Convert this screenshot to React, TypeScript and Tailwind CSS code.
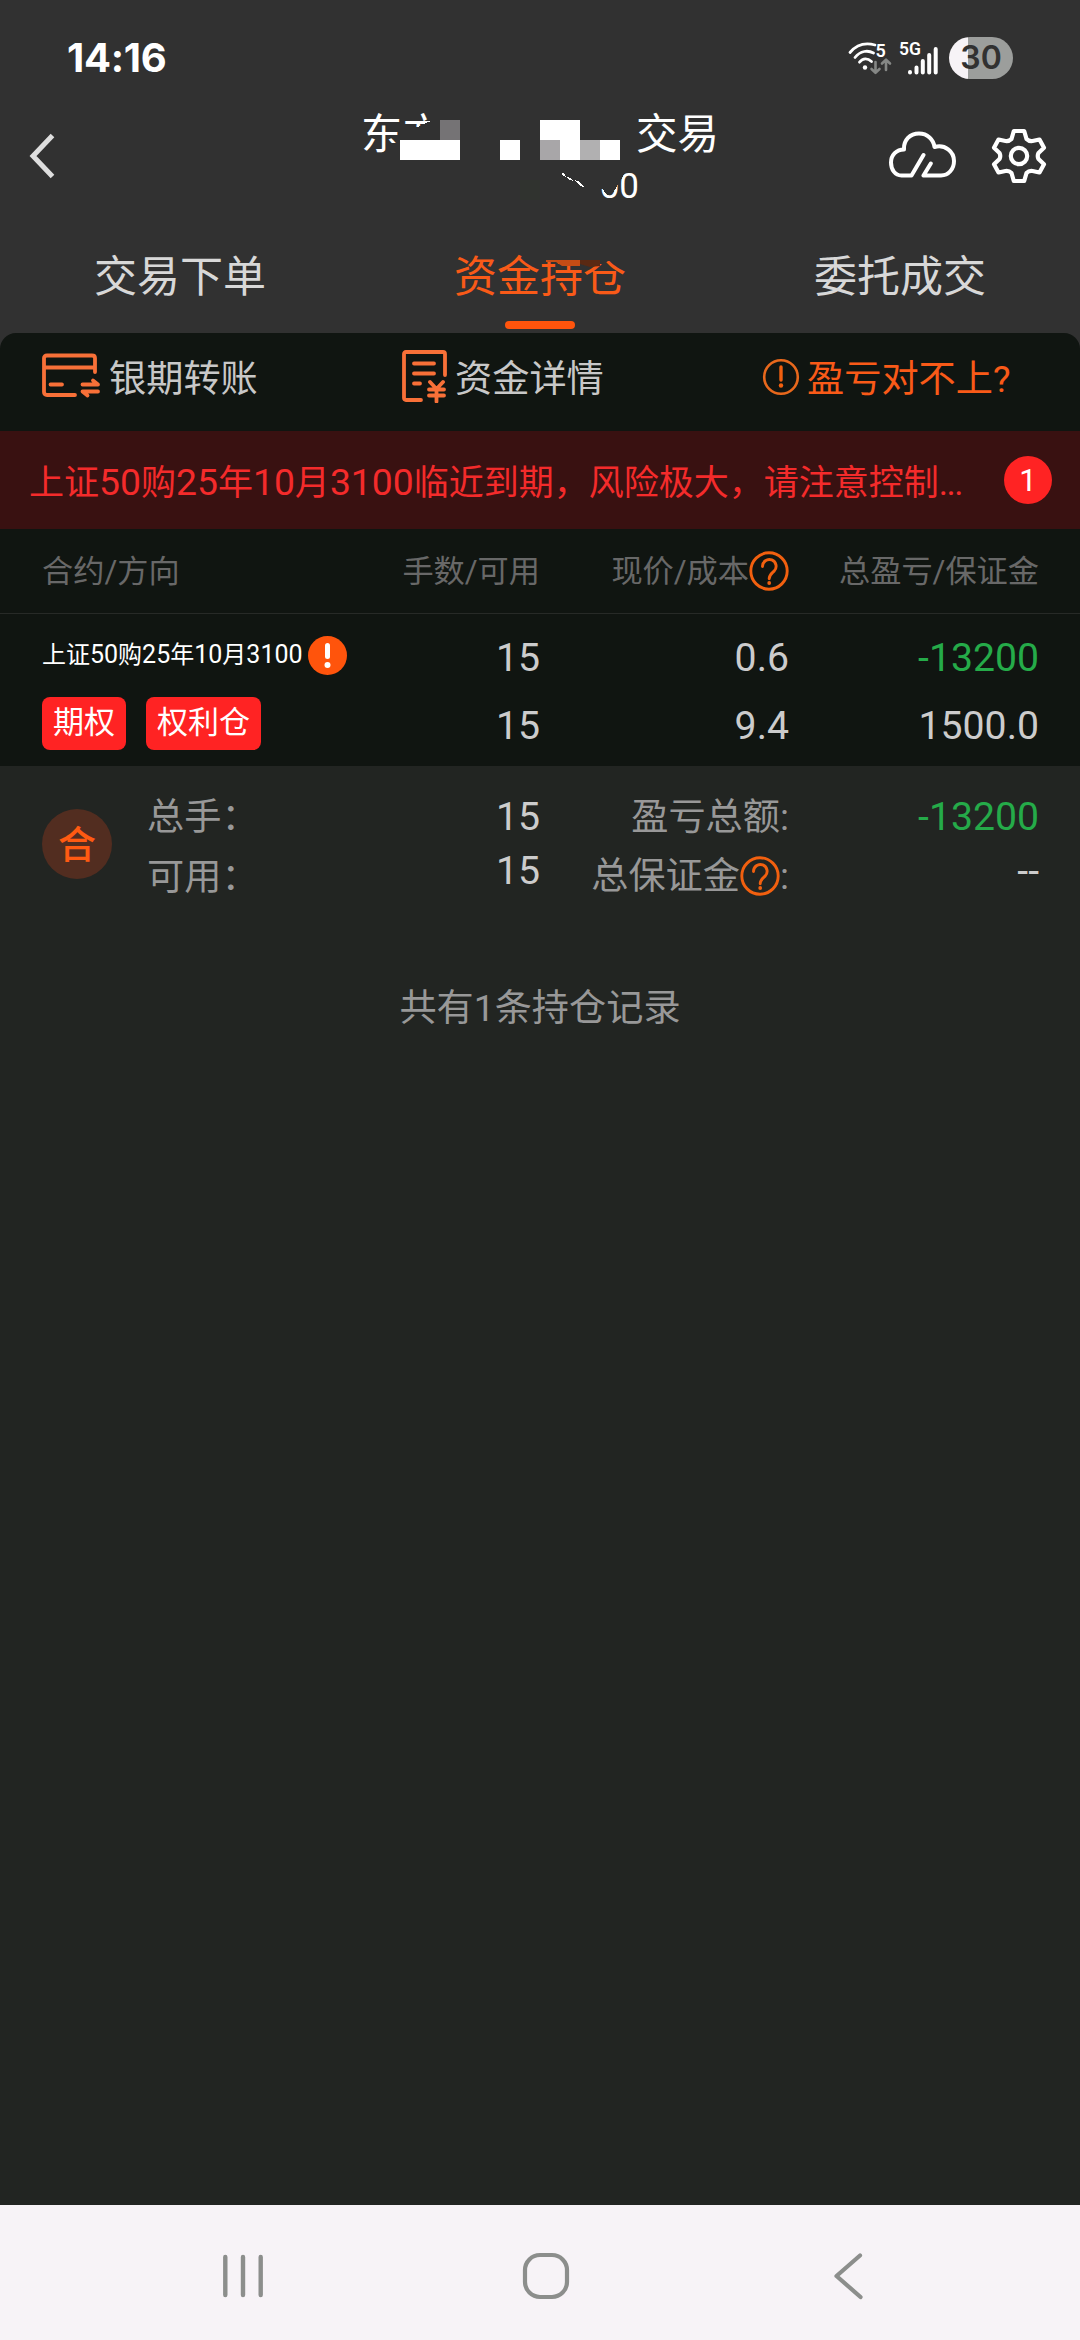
import React from "react";
import clsx from "clsx";

interface HoldingRow {
  name: string;
  tags: string[];
  lots: [string, string];
  price: [string, string];
  profit: [string, string];
}

const tabs = ["交易下单", "资金持仓", "委托成交"];

const holdings: HoldingRow[] = [
  {
    name: "上证50购25年10月3100",
    tags: ["期权", "权利仓"],
    lots: ["15", "15"],
    price: ["0.6", "9.4"],
    profit: ["-13200", "1500.0"],
  },
];

// Latin digits are set slightly larger than the Chinese glyphs around them
const MixedText: React.FC<{ text: string; digitClass: string }> = ({
  text,
  digitClass,
}) => (
  <>
    {text.split(/(\d+)/).map((part, index) =>
      /\d/.test(part) ? (
        <span key={index} className={digitClass}>
          {part}
        </span>
      ) : (
        part
      )
    )}
  </>
);

const HelpIcon: React.FC = () => (
  <svg
    width="40"
    height="40"
    viewBox="0 0 40 40"
    fill="none"
    className="mb-[3px] shrink-0"
  >
    <circle cx="20" cy="20" r="18.2" stroke="#f2600f" strokeWidth="2.9" />
    <path
      d="M13.5 15.5a6.8 6.8 0 1 1 11.6 4.6c-2.6 2.6-4.9 3.9-4.9 7.6"
      stroke="#f2600f"
      strokeWidth="2.9"
      strokeLinecap="round"
    />
    <circle cx="20.2" cy="32" r="1.9" fill="#f2600f" />
  </svg>
);

const StatusBar: React.FC = () => (
  <div className="flex h-[98px] items-start justify-between pl-[67px] pr-[67px] pt-[36px]">
    <span className="font-['Inter',sans-serif] text-[40px] font-bold leading-[44px] tracking-[-0.3px] text-white">
      14:16
    </span>
    <div className="flex items-center">
      <svg width="94" height="44" viewBox="0 0 94 44" fill="none">
        <g stroke="#fff" strokeWidth="2.8" strokeLinecap="round">
          <path d="M2 16.5C9.5 7.5 18 6.5 27 9" />
          <path d="M7 21.5C12.5 14.5 20 14 25.5 17" />
          <path d="M11.5 26.2C15 22 19.5 22 23.5 25.5" />
        </g>
        <circle cx="17" cy="31.5" r="2.2" fill="#fff" />
        <text
          x="27.5"
          y="20.5"
          fontSize="18"
          fontWeight="600"
          fill="#fff"
          fontFamily="Roboto, sans-serif"
        >
          5
        </text>
        <g
          stroke="#858785"
          strokeWidth="2.6"
          strokeLinecap="round"
          strokeLinejoin="round"
        >
          <path d="M27.5 26v10.5M23.5 33l4 3.8 4-3.8" />
          <path d="M38 34V24.2M34 27.5l4-3.8 4 3.8" />
        </g>
        <text
          x="51"
          y="18.5"
          fontSize="17.5"
          fontWeight="600"
          fill="#fff"
          fontFamily="Roboto, sans-serif"
        >
          5G
        </text>
        <g stroke="#fff" strokeWidth="4" strokeLinecap="round">
          <path d="M62 36v.5M68.5 31.5v5M74.8 25v11.5M81.2 19v17.5M87.7 13v23.5" />
        </g>
      </svg>
      <div className="ml-[7px] flex h-[42px] w-[64px] items-center justify-center rounded-full bg-[linear-gradient(to_right,#f7f3f7_19px,#9c9e9c_19px)] font-['Inter',sans-serif] text-[32px] font-semibold text-[#313131]">
        30
      </div>
    </div>
  </div>
);

const TitleBar: React.FC = () => (
  <div className="flex h-[116px] items-center justify-between pl-[29px] pr-[33px]">
    <svg
      width="26"
      height="46"
      viewBox="0 0 26 46"
      fill="none"
      className="mr-[83px]"
    >
      <path d="M23.5 2.5L4 23l19.5 20.5" stroke="#dedede" strokeWidth="5" />
    </svg>

    <div className="relative ml-[54px] h-full w-[358px] text-white">
      <div className="flex h-[70px] items-center justify-between pt-[5px] text-[41.5px]">
        <span>东方</span>
        <span>交易</span>
      </div>
      <div className="flex h-[34px] items-center justify-end pr-[80px] pt-[2px] text-[35px] leading-none">
        <span>00</span>
      </div>
      {/* privacy mosaic over the account name and number */}
      <svg
        width="358"
        height="116"
        viewBox="361 98 358 116"
        className="absolute left-0 top-0"
        shapeRendering="crispEdges"
      >
        <path
          d="M386 143H400V127H418L424 124L431 121L434 116H460V160H386Z"
          fill="#313131"
        />
        <path
          d="M596 168H628L622 178L617 186L613 193L607 195L602 188L596 200Z"
          fill="#313131"
        />
        <path
          d="M400 140h60v20h-60zM500 140h20v20h-20zM540 120h40v20h-40zM560 140h20v20h-20zM600 140h20v20h-20z"
          fill="#fff"
        />
        <path d="M440 120h20v20h-20z" fill="#757375" />
        <path d="M540 140h20v20h-20z" fill="#a8a6a8" />
        <path d="M580 140h20v20h-20z" fill="#b1b0b1" />
        <path d="M520 180h20v20h-20z" fill="#30332f" />
        <path
          d="M562 173l3 1 1 3-3-1zM567 177l4 1 2 3-5-2zM574 180l4 1 6 6-4-1z"
          fill="#fff"
        />
      </svg>
    </div>

    <div className="flex items-center gap-[35px]">
      <svg
        width="68"
        height="48"
        viewBox="0 0 68 48"
        fill="none"
        stroke="#fff"
        strokeWidth="4"
        strokeLinejoin="round"
        strokeLinecap="round"
        className="mb-[4px]"
      >
        <path d="M35.5 45.5L42.8 33.5M35.5 45.5H53C60.5 45.5 66 39 66 31C66 21.500 57 14 46.500 17C45.5 9.5 39.5 3.5 31 3.5C22 3.5 15.5 10 16 19.5C8.500 19.5 3 25 3 32.5C3 39.5 7 45.5 13.5 45.5H23.5L35.5 25" />
      </svg>
      <svg
        width="56"
        height="56"
        viewBox="0 0 56 56"
        fill="none"
        stroke="#fff"
        strokeWidth="4.2"
        strokeLinejoin="round"
      >
        <path d="M22.8 3H33.2L35.5 11Q38 13.5 41.5 13L48.5 11.5L53 19.8L47.5 25Q46 28 47.5 31L53 36.2L48.5 44.5L41.5 43Q38 42.5 35.5 45L33.2 53H22.8L20.5 45Q18 42.5 14.5 43L7.5 44.5L3 36.2L8.5 31Q10 28 8.5 25L3 19.8L7.5 11.5L14.5 13Q18 13.5 20.5 11Z" />
        <circle cx="28" cy="28" r="8.2" />
      </svg>
    </div>
  </div>
);

const TabBar: React.FC = () => (
  <div className="grid h-[119px] grid-cols-3 pt-[33px]">
    {tabs.map((tab, index) => (
      <div key={tab} className="relative flex flex-col items-center">
        <span
          className={clsx(
            "h-[60px] text-[43px] leading-[60px]",
            index === 1 ? "text-[#f95a18]" : "text-[#d8d8d8]"
          )}
        >
          {tab}
        </span>
        {index === 1 && (
          <>
            {/* lower edge of the mosaic */}
            <svg
              width="70"
              height="18"
              viewBox="545 250 70 18"
              className="absolute left-[185px] top-[3px]"
            >
              <path d="M545 250H615V261H608L604 264H600V260H545Z" fill="#313131" />
              <path d="M546 260H580V266H562L556 262H546Z" fill="#c54c15" />
              <path d="M580 260H600V266L590 267L580 264Z" fill="#5a2913" />
            </svg>
            <span className="mt-[14px] h-[8px] w-[70px] rounded-full bg-[#ff540c]" />
          </>
        )}
      </div>
    ))}
  </div>
);

const ActionBar: React.FC = () => (
  <div className="grid h-[98px] grid-cols-[360px_361px_1fr] rounded-t-[16px] bg-[#101511] pb-[5px] text-[37.2px] text-[#c8c8c8]">
    <div className="flex items-center pl-[41px]">
      <svg
        width="60"
        height="46"
        viewBox="0 0 60 46"
        fill="none"
        stroke="#f87038"
        strokeWidth="3.8"
        strokeLinecap="round"
        strokeLinejoin="round"
        className="mb-[7px]"
      >
        <path d="M34 42H6Q3 42 3 39V5Q3 2.500 6 2.500H51Q54 2.500 54 5V19M3 14.500H54M9.500 31.500H21" />
        <path d="M41.5 31.5H57L52 27.5M57 38.5H41.5L46.5 42.5" />
      </svg>
      <span className="ml-[8px]">银期转账</span>
    </div>
    <div className="flex items-center pl-[41px]">
      <svg
        width="46"
        height="54"
        viewBox="0 0 46 54"
        fill="none"
        stroke="#f87038"
        strokeWidth="3.8"
        strokeLinecap="round"
        strokeLinejoin="round"
        className="mb-[7px]"
      >
        <path d="M20 51H5Q3 51 3 49V5Q3 3 5 3H42Q44 3 44 5V26" />
        <path d="M13 14.5H33M13 24.5H33M13 34.5H19" />
        <path d="M29 33L35.5 40L42 33M35.5 40V52.5M28 40.5H43M28 46.5H43" />
      </svg>
      <span className="ml-[8px]">资金详情</span>
    </div>
    <div className="flex items-center pl-[41px] text-[#f95a18]">
      <svg
        width="38"
        height="38"
        viewBox="0 0 38 38"
        fill="none"
        className="mb-[6px]"
      >
        <circle cx="19" cy="19" r="16.8" stroke="#e8681c" strokeWidth="2.6" />
        <path
          d="M19 9V22"
          stroke="#f2600f"
          strokeWidth="3.4"
          strokeLinecap="round"
        />
        <circle cx="19" cy="27.5" r="2.2" fill="#f2600f" />
      </svg>
      <span className="ml-[7px]">盈亏对不上?</span>
    </div>
  </div>
);

const RiskBanner: React.FC = () => (
  <div className="flex h-[98px] items-center justify-between bg-[#391111] pl-[29px] pr-[28px]">
    <p className="whitespace-nowrap pt-[6px] text-[35px] leading-[50px] text-[#f42b2b]">
      <MixedText
        text="上证50购25年10月3100临近到期，风险极大，请注意控制"
        digitClass="text-[37.3px]"
      />
      <span className="tracking-[-1.5px]">...</span>
    </p>
    <span className="flex size-[48px] items-center justify-center rounded-full bg-[#ff2323] pt-[2px] text-[31px] text-white">
      1
    </span>
  </div>
);

const HoldingsTable: React.FC = () => (
  <div className="bg-[#101511]">
    <div className="grid h-[85px] grid-cols-[250px_248px_249px_250px] items-center border-b border-[#272a27] px-[42px] pt-[3px] text-right text-[31.2px] text-[#686868]">
      <span className="text-left">合约/方向</span>
      <span>手数/可用</span>
      <span className="flex items-center justify-end">
        现价/成本
        <HelpIcon />
      </span>
      <span>总盈亏/保证金</span>
    </div>
    {holdings.map((row) => (
      <div
        key={row.name}
        className="grid h-[152px] grid-cols-[310px_188px_249px_250px] px-[42px] text-right text-[39.2px] text-[#cccccc]"
      >
        <div className="pt-[7px] text-left text-white">
          <div className="flex h-[68px] items-center whitespace-nowrap text-[24px]">
            <span>
              <MixedText text={row.name} digitClass="text-[25px]" />
            </span>
            <svg
              width="39"
              height="39"
              viewBox="0 0 39 39"
              className="ml-[5px] shrink-0"
            >
              <circle cx="19.5" cy="19.5" r="19.5" fill="#ff540c" />
              <path
                d="M19.5 9.5V20.5"
                stroke="#fff"
                strokeWidth="5"
                strokeLinecap="round"
              />
              <circle cx="19.5" cy="29" r="3" fill="#fff" />
            </svg>
          </div>
          <div className="flex h-[68px] items-center gap-[20px] text-[31px]">
            {row.tags.map((tag) => (
              <span
                key={tag}
                className="flex h-[53px] items-center rounded-[8px] bg-[#ff2323] px-[11px] pt-[1px]"
              >
                {tag}
              </span>
            ))}
          </div>
        </div>
        <div className="pt-[10px]">
          <div className="h-[68px] leading-[68px]">{row.lots[0]}</div>
          <div className="h-[68px] leading-[68px]">{row.lots[1]}</div>
        </div>
        <div className="pt-[10px]">
          <div className="h-[68px] leading-[68px]">{row.price[0]}</div>
          <div className="h-[68px] leading-[68px]">{row.price[1]}</div>
        </div>
        <div className="pt-[10px]">
          <div className="h-[68px] leading-[68px] text-[#25ab49]">
            {row.profit[0]}
          </div>
          <div className="h-[68px] leading-[68px]">{row.profit[1]}</div>
        </div>
      </div>
    ))}
  </div>
);

const Summary: React.FC = () => (
  <div className="grid h-[154px] grid-cols-[105px_200px_193px_249px_250px] px-[42px] pt-[21px] text-right text-[37.2px] text-[#989898]">
    <div className="mt-[22px] flex size-[70px] items-center justify-center rounded-full bg-[#522d20] pt-[2px] text-[38px] font-medium text-[#ff5a12]">
      合
    </div>
    <div className="text-left">
      <div className="h-[60px] leading-[60px]">总手：</div>
      <div className="h-[60px] leading-[60px]">可用：</div>
    </div>
    <div className="text-[39.2px] text-[#cccccc]">
      <div className="h-[54px] leading-[60px]">15</div>
      <div className="h-[54px] leading-[60px]">15</div>
    </div>
    <div>
      <div className="h-[60px] leading-[60px]">盈亏总额:</div>
      <div className="flex h-[60px] items-center justify-end whitespace-nowrap">
        总保证金
        <HelpIcon />:
      </div>
    </div>
    <div className="text-[39.2px] text-[#cccccc]">
      <div className="h-[54px] leading-[60px] text-[#25ab49]">-13200</div>
      <div className="h-[54px] leading-[60px]">--</div>
    </div>
  </div>
);

const NavigationBar: React.FC = () => (
  <div className="flex h-[135px] items-center justify-between bg-[#f7f3f7] pl-[221px] pr-[216px] pt-[7px]">
    <svg
      width="44"
      height="48"
      viewBox="0 0 44 48"
      stroke="#8c8e8c"
      strokeWidth="4.4"
      strokeLinecap="round"
    >
      <path d="M4.3 5V43M22 5V43M39.7 5V43" />
    </svg>
    <svg width="50" height="50" viewBox="0 0 50 50" fill="none" className="mr-[6px]">
      <rect
        x="4"
        y="4"
        width="42"
        height="42"
        rx="15"
        stroke="#8c8e8c"
        strokeWidth="4.2"
      />
    </svg>
    <svg
      width="32"
      height="50"
      viewBox="0 0 32 50"
      fill="none"
      stroke="#8c8e8c"
      strokeWidth="4.2"
      strokeLinecap="round"
      strokeLinejoin="round"
    >
      <path d="M28 4.5L4.5 25L28.5 46" />
    </svg>
  </div>
);

const App: React.FC = () => {
  return (
    <div className="flex h-[2340px] w-[1080px] flex-col overflow-hidden bg-[#222522] font-['Roboto','Noto_Sans_CJK_SC',sans-serif]">
      <header className="bg-[#313131]">
        <StatusBar />
        <TitleBar />
        <TabBar />
      </header>
      <main className="flex-1">
        <div className="bg-[#313131]">
          <ActionBar />
        </div>
        <RiskBanner />
        <HoldingsTable />
        <Summary />
        <p className="mt-[62px] text-center text-[37.2px] leading-[52px] text-[#989898]">
          共有1条持仓记录
        </p>
      </main>
      <NavigationBar />
    </div>
  );
};

export default App;
